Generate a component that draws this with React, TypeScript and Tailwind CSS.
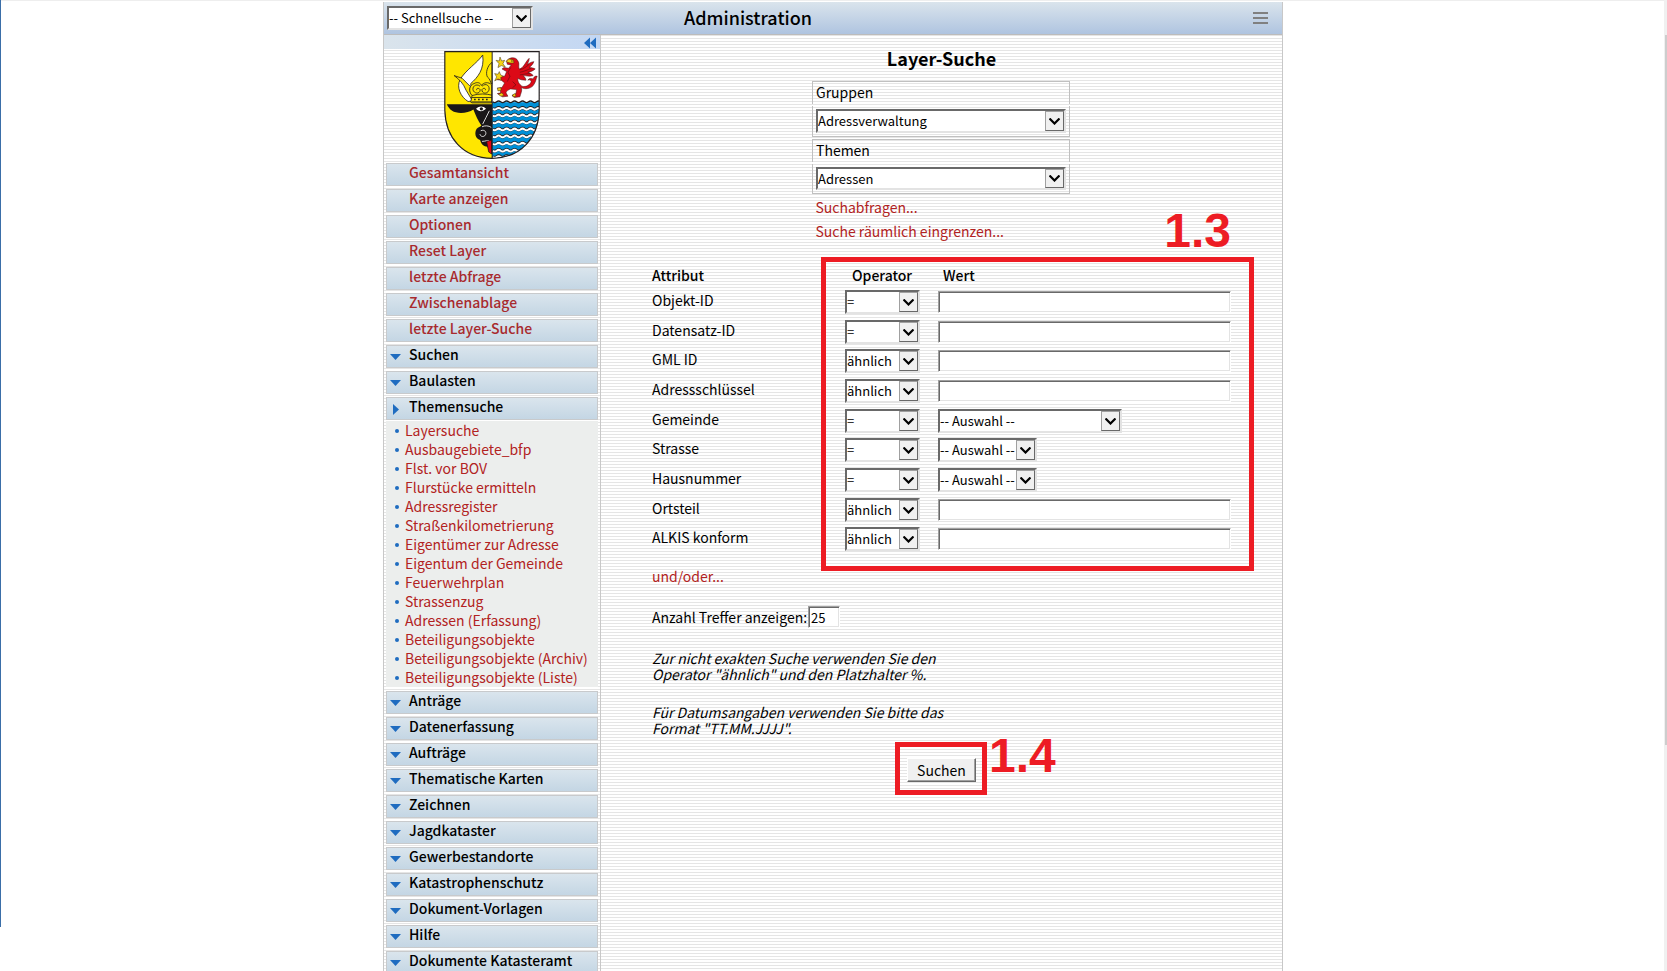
import React from "react";

const FONT =
  "font-['Noto_Sans_CJK_SC','Noto_Sans',sans-serif]";
const STRIPES =
  "bg-[repeating-linear-gradient(to_bottom,#e5e5e5_0px,#e5e5e5_1px,#ffffff_1px,#ffffff_3px)]";

const topLinks = [
  "Gesamtansicht",
  "Karte anzeigen",
  "Optionen",
  "Reset Layer",
  "letzte Abfrage",
  "Zwischenablage",
  "letzte Layer-Suche",
];

const themeLinks = [
  "Layersuche",
  "Ausbaugebiete_bfp",
  "Flst. vor BOV",
  "Flurstücke ermitteln",
  "Adressregister",
  "Straßenkilometrierung",
  "Eigentümer zur Adresse",
  "Eigentum der Gemeinde",
  "Feuerwehrplan",
  "Strassenzug",
  "Adressen (Erfassung)",
  "Beteiligungsobjekte",
  "Beteiligungsobjekte (Archiv)",
  "Beteiligungsobjekte (Liste)",
];

const lowerGroups = [
  "Anträge",
  "Datenerfassung",
  "Aufträge",
  "Thematische Karten",
  "Zeichnen",
  "Jagdkataster",
  "Gewerbestandorte",
  "Katastrophenschutz",
  "Dokument-Vorlagen",
  "Hilfe",
  "Dokumente Katasteramt",
];

type Row = { id: string; label: string; op: string; kind: "text" | "wide" | "narrow" };

const rows: Row[] = [
  { id: "objekt", label: "Objekt-ID", op: "=", kind: "text" },
  { id: "datensatz", label: "Datensatz-ID", op: "=", kind: "text" },
  { id: "gml", label: "GML ID", op: "ähnlich", kind: "text" },
  { id: "schluessel", label: "Adressschlüssel", op: "ähnlich", kind: "text" },
  { id: "gemeinde", label: "Gemeinde", op: "=", kind: "wide" },
  { id: "strasse", label: "Strasse", op: "=", kind: "narrow" },
  { id: "hausnummer", label: "Hausnummer", op: "=", kind: "narrow" },
  { id: "ortsteil", label: "Ortsteil", op: "ähnlich", kind: "text" },
  { id: "alkis", label: "ALKIS konform", op: "ähnlich", kind: "text" },
];

function Select({
  id,
  label,
  value,
  options,
  size,
}: {
  id: string;
  label?: string;
  value: string;
  options?: string[];
  size: string;
}) {
  return (
    <div className={`relative ${size}`}>
      <select
        id={id}
        aria-label={label}
        defaultValue={value}
        className="block h-full w-full appearance-none border-2 border-t-[#696969] border-l-[#696969] border-r-[#e3e3e3] border-b-[#e3e3e3] bg-white text-[13px] leading-[18px] text-black outline-none"
      >
        {(options ?? [value]).map((o) => (
          <option key={o}>{o}</option>
        ))}
      </select>
      <span className="pointer-events-none absolute top-[2px] right-[2px] bottom-[2px] flex w-[19px] items-center justify-center border border-t-[#a0a0a0] border-l-[#a0a0a0] border-r-[#696969] border-b-[#696969] bg-[#f0f0f0]">
        <svg width="11" height="7" viewBox="0 0 11 7" fill="none">
          <path d="M0.500 0.500L5.500 5.500L10.500 0.500" stroke="#000" strokeWidth="2.200" />
        </svg>
      </span>
    </div>
  );
}

const INPUT =
  "block h-[22px] border border-t-[#a0a0a0] border-l-[#a0a0a0] border-r-white border-b-white bg-white px-[2px] text-[13px] leading-[18px] text-black outline-none shadow-[inset_1px_1px_0_#696969,inset_-1px_-1px_0_#e3e3e3]";

function MenuGroup({ label, open }: { label: string; open?: boolean }) {
  return (
    <button
      type="button"
      className="flex h-[23px] w-full items-start border border-[#c8cacc] bg-linear-to-b from-[#dae5ed] to-[#c4d6e4] text-left text-[14px] leading-[16px] font-medium text-black"
    >
      <span className="flex h-[21px] w-[22px] shrink-0 items-center pt-px pl-[3px]">
        {open ? (
          <svg width="11" height="11" viewBox="0 0 11 11" className="shrink-0">
            <path d="M3 0L9 5.5L3 11Z" fill="#1f6cc0" />
          </svg>
        ) : (
          <svg width="11" height="6" viewBox="0 0 11 6" className="shrink-0">
            <path d="M0 0H11L5.5 6Z" fill="#1f6cc0" />
          </svg>
        )}
      </span>
      {label}
    </button>
  );
}

function Wave({ y }: { y: number }) {
  return (
    <g>
      <path
        d={`M350 ${y}q6 5 12 0t12 0t12 0t12 0t12 0t12 0t12 0t12 0t12 0t12 0t12 0t12 0`}
        stroke="#231f20"
        strokeWidth="9"
        fill="none"
      />
      <path
        d={`M350 ${y + 1}q6 5 12 0t12 0t12 0t12 0t12 0t12 0t12 0t12 0t12 0t12 0t12 0t12 0`}
        stroke="#fff"
        strokeWidth="6"
        fill="none"
      />
    </g>
  );
}

function CoatOfArms() {
  const shield =
    "M206 154H490V330C488 412 436 474 348 475C260 474 208 412 206 330Z";
  return (
    <svg width="96" height="108" viewBox="204 152 288 325" role="img" aria-label="Wappen">
      <clipPath id="shield">
        <path d={shield} />
      </clipPath>
      <g clipPath="url(#shield)">
        <rect x="204" y="152" width="145" height="325" fill="#ffe600" />
        <rect x="348" y="152" width="145" height="155" fill="#fff" />
        <rect x="348" y="306" width="145" height="171" fill="#0090d7" />
        <path
          d="M350 305q6 5 12 0t12 0t12 0t12 0t12 0t12 0t12 0t12 0t12 0t12 0t12 0t12 0"
          stroke="#231f20"
          strokeWidth="4"
          fill="none"
        />
        {[325, 345, 366, 387, 408, 430, 451, 470].map((y) => (
          <Wave key={y} y={y} />
        ))}
        <g stroke="#231f20" strokeWidth="2.5" strokeLinejoin="round">
          <path d="M320 164C304 188 268 210 252 238C240 262 254 290 276 304L290 302L284 250C304 232 326 208 320 164Z" fill="#fff" />
          <path d="M348 186C334 196 328 218 334 230C344 236 342 248 348 252Z" fill="#ffe600" />
          <path d="M234 226L258 234L284 260C278 266 282 276 290 286L288 300L270 270C262 250 250 238 234 226Z" fill="#ffe600" />
          <path d="M284 306L288 286C276 274 280 254 294 250C304 244 314 248 316 256C322 246 338 244 347 254V308H288Z" fill="#ffe600" />
          <path d="M312 258C300 248 286 260 292 272C300 284 314 278 312 268C308 262 300 264 302 270" fill="none" />
          <path d="M318 258C330 246 344 258 338 272C330 284 316 278 318 268C322 262 330 264 328 270" fill="none" />
          <path d="M288 286C308 280 330 280 348 285M287 292H348M287 305H348" fill="none" />
          <path d="M294 298h5M306 298h5M318 298h5M330 298h5" strokeWidth="5" fill="none" />
        </g>
        <path
          d="M212 312H348V462L341 458L334 440C324 440 316 434 312 420C298 416 294 398 302 386C306 380 314 380 316 376C306 362 298 344 292 328C276 340 242 342 228 332C220 326 216 320 212 312Z"
          fill="#1a1718"
        />
        <path d="M300 326C310 316 322 318 330 326C320 336 308 336 300 326Z" fill="#fff" />
        <circle cx="316" cy="326" r="5" fill="#1a1718" />
        <path d="M340 332C334 346 326 358 320 372M318 380C326 376 338 376 346 382M314 392C328 386 334 400 326 407C320 412 312 408 312 402M318 424C328 424 334 420 340 422" stroke="#fff" strokeWidth="2.5" fill="none" />
        <path d="M332 424L347 420V462L338 456Z" fill="#e30613" stroke="#1a1718" strokeWidth="2" />
        <g fill="#dc0a17" stroke="#3a1010" strokeWidth="1.5" strokeLinejoin="round">
          <path d="M392 182C400 170 420 168 426 182C432 190 426 198 430 206C444 204 448 184 460 174C460 182 456 188 454 192C462 188 468 184 474 184C470 194 464 198 460 202C468 202 474 204 478 206C470 214 462 214 456 216C464 218 468 222 472 226C460 230 450 226 442 226C448 232 450 236 450 240C440 240 430 238 426 234C424 244 430 252 438 258C452 262 464 252 466 244C464 238 460 238 456 240C460 232 470 236 472 236C474 230 478 226 484 228C480 236 480 246 472 256C464 266 446 268 436 262C440 272 434 280 432 290L416 292L408 286L420 280L422 268L404 266C398 268 392 272 390 278L396 288L380 290L364 280L374 278L372 268L364 264L378 262L386 248L376 240L360 238L372 228L386 228L392 214L378 206L384 202L398 204L406 194L394 192Z" />
          <path d="M432 208C444 206 452 198 460 192M432 216C444 214 456 208 466 204M432 224C444 222 454 220 462 220M404 202L396 216L402 228L394 244M410 244L420 254L410 262" fill="none" />
        </g>
        <g stroke="#3a2d10" strokeWidth="1.5" fill="#f6d313">
          <path d="M360 180L370 182L372 170L377 182L386 180L381 190L388 200L376 196L366 202L369 190Z" />
          <path d="M356 220L366 222L370 214L374 224L382 228L374 232L376 240L366 236L356 242L362 230Z" />
          <path d="M390 184L398 176L412 178L414 188L402 188Z" />
          <path d="M364 264L374 262L376 270L366 272ZM410 284L418 280L420 288L412 290ZM368 282L378 278L384 286L374 288Z" />
        </g>
        <circle cx="408" cy="182" r="2" fill="#231f20" />
        <path d="M348.500 154V475" stroke="#231f20" strokeWidth="3" />
      </g>
      <path d={shield} fill="none" stroke="#231f20" strokeWidth="3.500" />
    </svg>
  );
}

function Sidebar() {
  return (
    <nav className="w-[217px] shrink-0 border-r border-[#c8c8c8]">
      <div className="flex h-[14px] items-end justify-end bg-linear-to-r from-[#dae4ec] to-[#c3d7f3] pr-[4px]">
        <button type="button" aria-label="Menü einklappen" className="block">
          <svg width="12" height="12" viewBox="0 0 12 12" className="block">
            <path d="M6 0.500V11.500L0 6ZM12 0.500V11.500L6 6Z" fill="#1f6cc0" />
          </svg>
        </button>
      </div>
      <div className="flex px-[60px] pt-[2px] pb-[4px]">
        <CoatOfArms />
      </div>
      <div className="flex flex-col gap-[3px] px-[2px]">
        {topLinks.map((t) => (
          <a
            key={t}
            href="#"
            className="block h-[23px] border border-[#c8cacc] bg-linear-to-b from-[#dae5ed] to-[#c4d6e4] pl-[22px] text-[14px] leading-[16px] font-medium text-[#a82a2e]"
          >
            {t}
          </a>
        ))}
        <MenuGroup label="Suchen" />
        <MenuGroup label="Baulasten" />
        <MenuGroup label="Themensuche" open />
      </div>
      <ul className="mx-[2px] mt-px mb-[4px] bg-[#eceeed]">
        {themeLinks.map((t) => (
          <li key={t} className="flex h-[19px] items-center pl-[9px]">
            <span className="mr-[6px] size-[4px] rounded-full bg-[#1f6cc0]" />
            <a href="#" className="text-[14px] leading-[19px] text-[#b22222]">
              {t}
            </a>
          </li>
        ))}
      </ul>
      <div className="flex flex-col gap-[3px] px-[2px]">
        {lowerGroups.map((t) => (
          <MenuGroup key={t} label={t} />
        ))}
      </div>
    </nav>
  );
}

function LayerPicker({
  id,
  label,
  value,
  size,
}: {
  id: string;
  label: string;
  value: string;
  size: string;
}) {
  return (
    <div className="flex flex-col gap-[2px]">
      <div className="h-[23px] border border-b-0 border-[#c0c0c0] pl-[3px]">
        <label htmlFor={id} className="block text-[14px] leading-[20px]">
          {label}
        </label>
      </div>
      <div className="border border-t-0 border-[#c0c0c0] px-[3px] py-[3px]">
        <Select id={id} value={value} size={size} />
      </div>
    </div>
  );
}

export default function App() {
  return (
    <div className={`flex h-screen overflow-hidden bg-white text-black ${FONT}`}>
      <div className="h-[927px] w-px shrink-0 bg-[#3a6ea8]" />
      <div className="flex min-w-0 flex-1 flex-col border-t border-[#eeeeee]">
        <div className="mx-auto mt-px flex w-[901px] flex-1 flex-col pl-px">
          <div className="flex flex-1 flex-col border-x border-[#c8c8c8]">
            <header className="flex h-[33px] shrink-0 items-center justify-between border-b border-[#bcbcbc] bg-linear-to-b from-[#dae4ec] to-[#afc4e0] pr-[14px] pl-[3px]">
              <div className="flex items-center gap-[151px]">
                <Select
                  id="schnellsuche"
                  label="Schnellsuche"
                  value="-- Schnellsuche --"
                  size="h-[24px] w-[146px]"
                />
                <h1 className="pb-[2px] text-[18px] leading-[24px] font-medium">Administration</h1>
              </div>
              <button type="button" aria-label="Menü" className="flex w-[15px] flex-col gap-[3px]">
                <span className="h-[2px] bg-[#808080]" />
                <span className="h-[2px] bg-[#808080]" />
                <span className="h-[2px] bg-[#808080]" />
              </button>
            </header>
            <div className={`flex flex-1 ${STRIPES}`}>
              <Sidebar />
              <main className="flex min-w-0 flex-1 flex-col items-center pt-[11px]">
                <h2 className="text-[18px] leading-[24px] font-bold">Layer-Suche</h2>
                <div className="mt-[11px] flex w-[259px] flex-col gap-[2px] pr-px">
                  <LayerPicker id="gruppen" label="Gruppen" value="Adressverwaltung" size="h-[24px] w-[250px]" />
                  <LayerPicker id="themen" label="Themen" value="Adressen" size="h-[23px] w-[250px]" />
                </div>
                <div className="mt-px flex w-[252px] flex-col text-[14px] leading-[24px] text-[#b22222]">
                  <a href="#">Suchabfragen...</a>
                  <a href="#">Suche räumlich eingrenzen...</a>
                </div>

                <form className="mt-[19px] w-[579px]" onSubmit={(e) => e.preventDefault()}>
                  <div className="relative">
                    <table className="w-full table-fixed border-collapse text-[14px]">
                      <colgroup>
                        <col className="w-[193px]" />
                        <col className="w-[93px]" />
                        <col />
                      </colgroup>
                      <thead>
                        <tr className="h-[25px] text-left leading-[20px]">
                          <th className="p-0 font-medium">Attribut</th>
                          <th className="p-0 pl-[7px] font-medium">Operator</th>
                          <th className="p-0 pl-[5px] font-medium">Wert</th>
                        </tr>
                      </thead>
                      <tbody>
                        {rows.map((r) => (
                          <tr key={r.id} className="h-[30px] align-top nth-[3n+2]:h-[29px]">
                            <td className="p-0 pt-[3px]">
                              <label htmlFor={r.id} className="block leading-[20px]">
                                {r.label}
                              </label>
                            </td>
                            <td className="p-0 pt-[3px]">
                              <Select
                                id={`${r.id}-op`}
                                label={`Operator ${r.label}`}
                                value={r.op}
                                options={["=", "ähnlich"]}
                                size="h-[24px] w-[75px]"
                              />
                            </td>
                            <td className="p-0 pt-[3px]">
                              {r.kind === "text" ? (
                                <input id={r.id} type="text" className={`${INPUT} mt-px w-full`} />
                              ) : (
                                <Select
                                  id={r.id}
                                  value="-- Auswahl --"
                                  size={r.kind === "wide" ? "h-[24px] w-[184px]" : "h-[24px] w-[99px]"}
                                />
                              )}
                            </td>
                          </tr>
                        ))}
                      </tbody>
                    </table>
                    <div className="pointer-events-none absolute -top-[5px] -right-[23px] h-[314px] w-[433px] border-5 border-[#ed1c24]" />
                    <div className="pointer-events-none absolute -top-[59px] right-0 font-['Liberation_Sans',sans-serif] text-[48px] leading-[56px] font-bold text-[#ed1c24]">
                      1.3
                    </div>
                  </div>

                  <a href="#" className="mt-[11px] block w-fit text-[14px] leading-[22px] text-[#b22222]">
                    und/oder...
                  </a>
                  <div className="mt-[19px] flex items-center gap-px text-[14px] leading-[22px]">
                    <label htmlFor="anzahl">Anzahl Treffer anzeigen:</label>
                    <input id="anzahl" type="text" defaultValue="25" className={`${INPUT} w-[32px]`} />
                  </div>
                  <div className="mt-[22px] flex w-[300px] flex-col gap-[22px] text-[14px] leading-[16px] italic">
                    <p>Zur nicht exakten Suche verwenden Sie den Operator "ähnlich" und den Platzhalter %.</p>
                    <p>Für Datumsangaben verwenden Sie bitte das Format "TT.MM.JJJJ".</p>
                  </div>
                  <div className="mt-[22px] flex justify-center">
                    <div className="relative">
                      <button
                        type="submit"
                        className="block h-[24px] w-[69px] border border-t-white border-l-white border-r-[#696969] border-b-[#696969] bg-[#f0f0f0] text-[14px] leading-[20px] shadow-[inset_-1px_-1px_0_#a0a0a0]"
                      >
                        Suchen
                      </button>
                      <div className="pointer-events-none absolute -top-[16px] -left-[12px] h-[53px] w-[92px] border-5 border-[#ed1c24]" />
                      <div className="pointer-events-none absolute -top-[30px] left-[82px] font-['Liberation_Sans',sans-serif] text-[48px] leading-[56px] font-bold text-[#ed1c24]">
                        1.4
                      </div>
                    </div>
                  </div>
                </form>
              </main>
            </div>
          </div>
        </div>
      </div>
      <div className="w-[3px] shrink-0 bg-[#f0f0f0] pt-[35px] pl-px">
        <div className="h-[710px] bg-[#cdcdcd]" />
      </div>
    </div>
  );
}
